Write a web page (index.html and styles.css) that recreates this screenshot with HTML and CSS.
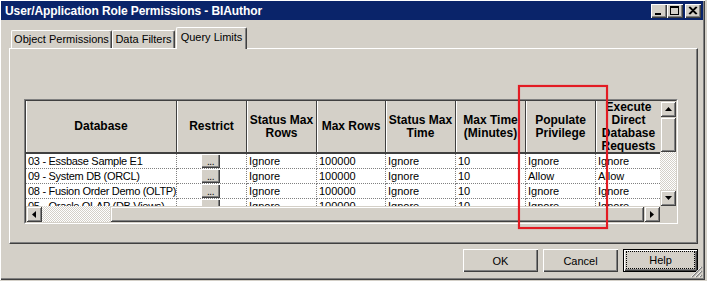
FILE: index.html
```html
<!DOCTYPE html>
<html>
<head>
<meta charset="utf-8">
<link rel="stylesheet" href="styles.css">
</head>
<body>
<div class="window">
  <div class="titlebar">
    <span class="title">User/Application Role Permissions - BIAuthor</span>
    <div class="controls">
      <span class="cbtn"><svg width="16" height="14" viewBox="0 0 16 14"><rect x="4" y="9" width="6" height="2" fill="#000"/></svg></span>
      <span class="cbtn"><svg width="16" height="14" viewBox="0 0 16 14"><rect x="3.5" y="2.5" width="8" height="8" fill="none" stroke="#000"/><rect x="3" y="2" width="9" height="2" fill="#000"/></svg></span>
      <span class="cbtn close"><svg width="16" height="14" viewBox="0 0 16 14"><path d="M4 3 L11 10 M5 3 L12 10 M11 3 L4 10 M12 3 L5 10" stroke="#000" stroke-width="1.1"/></svg></span>
    </div>
  </div>
  <div class="body">
    <div class="tabs">
      <div class="tab t-obj">Object Permissions</div>
      <div class="tab t-data">Data Filters</div>
      <div class="tab active t-query">Query Limits</div>
    </div>
    <div class="panel">
      <div class="grid">
        <div class="grid-inner">
          <div class="viewport">
            <div class="table">
              <div class="th">Database</div>
              <div class="th">Restrict</div>
              <div class="th">Status Max<br>Rows</div>
              <div class="th">Max Rows</div>
              <div class="th">Status Max<br>Time</div>
              <div class="th">Max Time<br>(Minutes)</div>
              <div class="th">Populate<br>Privilege</div>
              <div class="th">Execute<br>Direct<br>Database<br>Requests</div>

              <div class="td td-name">03 - Essbase Sample E1</div>
              <div class="td td-btn"><span class="dots">...</span></div>
              <div class="td">Ignore</div>
              <div class="td">100000</div>
              <div class="td">Ignore</div>
              <div class="td">10</div>
              <div class="td">Ignore</div>
              <div class="td">Ignore</div>

              <div class="td td-name">09 - System DB (ORCL)</div>
              <div class="td td-btn"><span class="dots">...</span></div>
              <div class="td">Ignore</div>
              <div class="td">100000</div>
              <div class="td">Ignore</div>
              <div class="td">10</div>
              <div class="td">Allow</div>
              <div class="td">Allow</div>

              <div class="td td-name">08 - Fusion Order Demo (OLTP)</div>
              <div class="td td-btn"><span class="dots">...</span></div>
              <div class="td">Ignore</div>
              <div class="td">100000</div>
              <div class="td">Ignore</div>
              <div class="td">10</div>
              <div class="td">Ignore</div>
              <div class="td">Ignore</div>

              <div class="td td-name">05 - Oracle OLAP (DB Views)</div>
              <div class="td td-btn"><span class="dots">...</span></div>
              <div class="td">Ignore</div>
              <div class="td">100000</div>
              <div class="td">Ignore</div>
              <div class="td">10</div>
              <div class="td">Ignore</div>
              <div class="td">Ignore</div>
            </div>
          </div>
          <div class="vscroll">
            <div class="sbtn"><svg width="7" height="4" viewBox="0 0 7 4"><polygon points="3.5,0 7,4 0,4" fill="#000"/></svg></div>
            <div class="thumb vthumb"></div>
            <div class="track"></div>
            <div class="sbtn"><svg width="7" height="4" viewBox="0 0 7 4"><polygon points="0,0 7,0 3.5,4" fill="#000"/></svg></div>
          </div>
          <div class="hscroll">
            <div class="sbtn"><svg width="4" height="7" viewBox="0 0 4 7"><polygon points="4,0 4,7 0,3.5" fill="#000"/></svg></div>
            <div class="track htrack"></div>
            <div class="thumb hthumb"></div>
            <div class="sbtn"><svg width="4" height="7" viewBox="0 0 4 7"><polygon points="0,0 4,3.5 0,7" fill="#000"/></svg></div>
          </div>
          <div class="corner"></div>
        </div>
      </div>
    </div>
    <div class="footer">
      <button class="btn">OK</button>
      <button class="btn">Cancel</button>
      <button class="btn default"><span class="focus">Help</span></button>
    </div>
  </div>
  <div class="highlight"></div>
  <div class="grip"><svg width="12" height="12" viewBox="0 0 12 12"><path d="M11 1 L1 11 M11 5 L5 11 M11 9 L9 11" stroke="#808080" stroke-width="1.2"/><path d="M10 1 L0 11 M10 5 L4 11 M10 9 L8 11" stroke="#fff" stroke-width="0.8"/></svg></div>
</div>
</body>
</html>
```
FILE: styles.css
```css
html, body {
  margin: 0;
  padding: 0;
}
body {
  background: #d4d0c8;
  width: 707px;
  height: 281px;
  overflow: hidden;
  font-family: "Liberation Sans", Arial, sans-serif;
  font-size: 11px;
  color: #000;
}
.window {
  position: relative;
  width: 705px;
  height: 280px;
  box-sizing: border-box;
  padding: 1px 2px 2px 1px;
  box-shadow: inset 1px 1px #fff, inset -1px -1px #404040, inset -2px -2px #808080;
}
.titlebar {
  height: 19px;
  background: #0a246a;
  display: flex;
  align-items: center;
  justify-content: space-between;
  padding: 0 2px 0 4px;
}
.title {
  color: #fff;
  font-weight: bold;
  font-size: 12px;
  letter-spacing: -0.1px;
}
.controls {
  display: flex;
  align-items: center;
}
.cbtn {
  width: 16px;
  height: 14px;
  background: #d4d0c8;
  box-shadow: inset 1px 1px #fff, inset -1px -1px #404040, inset -2px -2px #808080;
  display: block;
}
.cbtn svg { display: block; }
.cbtn.close { margin-left: 2px; }

.body {
  padding: 7px 0 0 8px;
}
.tabs {
  display: flex;
  align-items: flex-end;
  height: 21px;
  padding-left: 2px;
}
.tab {
  height: 18px;
  box-sizing: border-box;
  border-top: 1px solid #fff;
  border-left: 1px solid #fff;
  border-right: 1px solid #404040;
  border-top-left-radius: 2px;
  border-top-right-radius: 2px;
  box-shadow: inset -1px 0 #808080;
  text-align: center;
  line-height: 16px;
  font-size: 11px;
  white-space: nowrap;
}
.t-obj { width: 101px; }
.t-data { width: 63px; }
.t-query { width: 71px; margin-left: 1px; }
.tab.active {
  height: 22px;
  margin-bottom: -1px;
  position: relative;
  z-index: 1;
  background: #d4d0c8;
  line-height: 19px;
}
.panel {
  width: 689px;
  height: 196px;
  box-sizing: border-box;
  border-top: 1px solid #fff;
  border-left: 1px solid #fff;
  border-right: 1px solid #404040;
  border-bottom: 1px solid #404040;
  box-shadow: inset -1px -1px #808080;
  padding: 50px 0 0 14px;
}
.grid {
  width: 654px;
  box-sizing: border-box;
  border: 1px solid;
  border-color: #808080 #fff #fff #808080;
}
.grid-inner {
  border: 1px solid;
  border-color: #404040 #d4d0c8 #d4d0c8 #404040;
  display: grid;
  grid-template-columns: 634px 16px;
  grid-template-rows: 105px 16px;
}
.viewport {
  overflow: hidden;
  background: #fff;
}
.table {
  display: grid;
  width: 636px;
  grid-template-columns: 151px 70px 70px 69px 70px 70px 70px 66px;
  grid-template-rows: 53px;
  grid-auto-rows: 15px;
}
.th {
  box-sizing: border-box;
  background: #d4d0c8;
  border-right: 1px solid #404040;
  border-bottom: 2px solid #404040;
  box-shadow: inset 1px 0 #fff;
  display: flex;
  align-items: center;
  justify-content: center;
  text-align: center;
  font-weight: bold;
  font-size: 12px;
  line-height: 13px;
  overflow: hidden;
  white-space: nowrap;
}
.td {
  box-sizing: border-box;
  background: #fff;
  border-right: 1px dotted #808080;
  border-bottom: 1px dotted #808080;
  padding-left: 2px;
  white-space: nowrap;
  overflow: hidden;
  line-height: 14px;
  font-size: 11px;
}
.td-name {
  letter-spacing: -0.3px;
}
.td-btn {
  padding-left: 0;
  display: flex;
  justify-content: center;
  padding-right: 2px;
}
.dots {
  width: 19px;
  height: 14px;
  box-sizing: border-box;
  background: #d4d0c8;
  box-shadow: inset 1px 1px #fff, inset -1px -1px #404040, inset -2px -2px #808080;
  text-align: center;
  line-height: 15px;
  font-size: 10px;
  letter-spacing: -0.5px;
}
.vscroll {
  display: flex;
  flex-direction: column;
}
.hscroll {
  display: flex;
}
.sbtn {
  width: 16px;
  height: 16px;
  flex: none;
  background: #d4d0c8;
  box-shadow: inset 1px 1px #d4d0c8, inset -1px -1px #404040, inset 2px 2px #fff, inset -2px -2px #808080;
  display: flex;
  align-items: center;
  justify-content: center;
}
.sbtn svg { display: block; }
.thumb {
  background: #d4d0c8;
  box-shadow: inset 1px 1px #d4d0c8, inset -1px -1px #404040, inset 2px 2px #fff, inset -2px -2px #808080;
}
.vthumb { height: 35px; flex: none; }
.hthumb { flex: 1; }
.track {
  flex: 1;
  background: repeating-conic-gradient(#fff 0 25%, #d4d0c8 0 50%) 0 0 / 2px 2px;
}
.htrack { flex: none; width: 68px; }
.corner {
  background: #d4d0c8;
}
.footer {
  width: 689px;
  display: flex;
  justify-content: flex-end;
  gap: 5px;
  margin-top: 5px;
}
.btn {
  width: 75px;
  height: 23px;
  padding: 0;
  margin: 0;
  border: none;
  background: #d4d0c8;
  font-family: "Liberation Sans", Arial, sans-serif;
  font-size: 11px;
  color: #000;
  box-shadow: inset 1px 1px #fff, inset -1px -1px #404040, inset -2px -2px #808080;
}
.btn.default {
  box-shadow: inset 0 0 0 1px #000, inset 2px 2px #fff, inset -2px -2px #404040, inset -3px -3px #808080;
  display: block;
}
.focus {
  display: block;
  margin: 1px 3px 2px 3px;
  height: 18px;
  box-sizing: border-box;
  border: 1px dotted #000;
  line-height: 16px;
}
.highlight {
  position: absolute;
  left: 518px;
  top: 85px;
  width: 90px;
  height: 144px;
  box-sizing: border-box;
  border: 2px solid #e31b23;
  box-shadow: 0 0 1px rgba(227, 27, 35, 0.6), inset 0 0 1px rgba(227, 27, 35, 0.6);
  pointer-events: none;
}
.grip {
  position: absolute;
  right: 2px;
  bottom: 2px;
  width: 12px;
  height: 12px;
}
.grip svg { display: block; }
```
